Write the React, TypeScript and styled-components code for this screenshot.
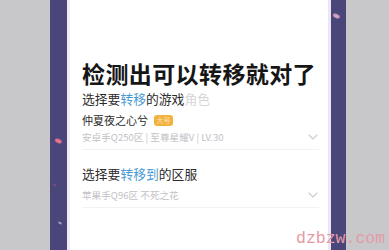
import React from "react";
import styled, { createGlobalStyle } from "styled-components";

const Global = createGlobalStyle`
  html, body { margin: 0; padding: 0; background: #c9c9cb; }
  body { font-family: "Noto Sans CJK SC", "Noto Sans", sans-serif; overflow: hidden; }
`;

const Page = styled.div`
  position: relative;
  display: flex;
  width: 389px;
  height: 250px;
  overflow: hidden;
`;

const Side = styled.div<{ $w?: number }>`
  flex: ${(p) => (p.$w ? `0 0 ${p.$w}px` : "1 1 auto")};
  background: #c8c8ca;
`;

const Band = styled.div<{ $w: number }>`
  position: relative;
  flex: 0 0 ${(p) => p.$w}px;
  background: #4b4679;
`;

const Petal = styled.span<{ $x: number; $y: number; $w: number; $c: string }>`
  position: absolute;
  left: ${(p) => p.$x}px;
  top: ${(p) => p.$y}px;
  width: ${(p) => p.$w}px;
  height: ${(p) => Math.max(2, p.$w / 2)}px;
  border-radius: 50%;
  background: ${(p) => p.$c};
  transform: rotate(25deg);
  filter: blur(0.4px);
`;

const Panel = styled.div`
  flex: 0 0 264px;
  box-sizing: border-box;
  background: #ffffff;
  border-left: 3px solid #f1ecf8;
  border-right: 3px solid #ece6f4;
  display: flex;
  flex-direction: column;
  padding: 58px 9px 0 12px;
`;

const Title = styled.div`
  font-size: 23px;
  line-height: 30px;
  font-weight: 700;
  letter-spacing: 0.4px;
  color: #161616;
  white-space: nowrap;
`;

const Label = styled.div<{ $top: number }>`
  margin-top: ${(p) => p.$top}px;
  font-size: 12.8px;
  line-height: 18px;
  color: #2a2a2a;
  white-space: nowrap;
`;

const Blue = styled.span`
  color: #4a9ad4;
`;

const Fade = styled.span`
  color: #d6d6d8;
`;

const Name = styled.div`
  display: flex;
  align-items: center;
  gap: 6px;
  margin-top: 5px;
  font-size: 11px;
  line-height: 15px;
  color: #2c2c2c;
`;

const Badge = styled.span`
  display: inline-flex;
  align-items: center;
  justify-content: center;
  width: 19px;
  height: 11px;
  border-radius: 3px;
  background: #f3b13e;
  color: #fbe3b5;
  font-size: 7px;
  line-height: 11px;
`;

const Row = styled.div<{ $top: number }>`
  display: flex;
  align-items: center;
  justify-content: space-between;
  margin-top: ${(p) => p.$top}px;
  padding-right: 1px;
  padding-bottom: 5px;
  border-bottom: 1px solid #f2f2f4;
`;

const Sub = styled.span`
  font-size: 9.6px;
  line-height: 14px;
  color: #c2c2c6;
  white-space: nowrap;
`;

const Chevron = () => (
  <svg width="10" height="6" viewBox="0 0 10 6" fill="none">
    <path d="M1 1 L5 5 L9 1" stroke="#cfcfd3" strokeWidth="1.2" strokeLinecap="round" strokeLinejoin="round" />
  </svg>
);

const Watermark = styled.div`
  position: absolute;
  left: 296px;
  top: 229px;
  font-family: "Liberation Mono", "DejaVu Sans Mono", monospace;
  font-size: 16.5px;
  line-height: 20px;
  color: #e59aa6;
  white-space: nowrap;
`;

export default function App() {
  return (
    <>
      <Global />
      <Page>
        <Side $w={50} />
        <Band $w={17}>
          <Petal $x={5} $y={139} $w={7} $c="#e8738f" />
          <Petal $x={3} $y={184} $w={3} $c="#8a4c84" />
          <Petal $x={8} $y={222} $w={4} $c="#a9a6c8" />
        </Band>
        <Panel>
          <Title>检测出可以转移就对了</Title>
          <Label $top={2}>
            选择要<Blue>转移</Blue>的游戏<Fade>角色</Fade>
          </Label>
          <Name>
            仲夏夜之心兮
            <Badge>大号</Badge>
          </Name>
          <Row $top={2}>
            <Sub>安卓手Q250区 | 至尊星耀V | LV.30</Sub>
            <Chevron />
          </Row>
          <Label $top={15}>
            选择要<Blue>转移到</Blue>的区服
          </Label>
          <Row $top={5}>
            <Sub>苹果手Q96区 不死之花</Sub>
            <Chevron />
          </Row>
        </Panel>
        <Band $w={15}>
          <Petal $x={2} $y={14} $w={7} $c="#d79fc4" />
        </Band>
        <Side />
        <Watermark>dzbzw.com</Watermark>
      </Page>
    </>
  );
}
